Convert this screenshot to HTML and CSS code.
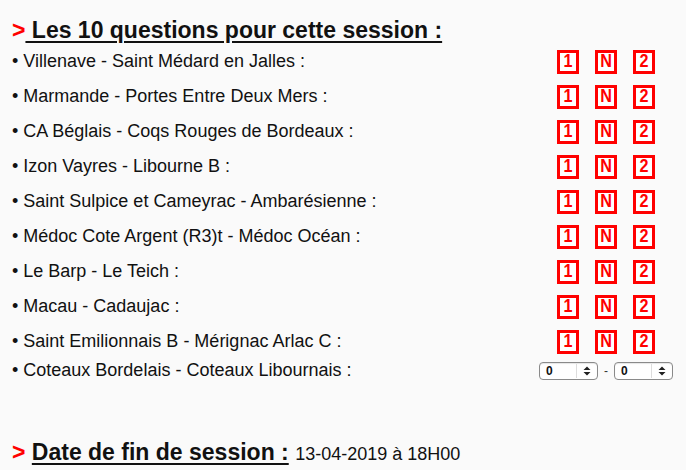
FILE: index.html
```html
<!DOCTYPE html>
<html lang="fr">
<head>
<meta charset="utf-8">
<title>Questions</title>
<link rel="stylesheet" href="styles.css">
</head>
<body>
<div class="page">
  <h2 class="title"><span class="arrow">&gt;</span><span class="ul"> Les 10 questions pour cette session :</span></h2>
  <div class="grid">
    <div class="match">• Villenave - Saint Médard en Jalles :</div>
    <div class="picks"><span class="pk"><span>1</span></span><span class="pk"><span>N</span></span><span class="pk"><span>2</span></span></div>
    <div class="match">• Marmande - Portes Entre Deux Mers :</div>
    <div class="picks"><span class="pk"><span>1</span></span><span class="pk"><span>N</span></span><span class="pk"><span>2</span></span></div>
    <div class="match">• CA Béglais - Coqs Rouges de Bordeaux :</div>
    <div class="picks"><span class="pk"><span>1</span></span><span class="pk"><span>N</span></span><span class="pk"><span>2</span></span></div>
    <div class="match">• Izon Vayres - Libourne B :</div>
    <div class="picks"><span class="pk"><span>1</span></span><span class="pk"><span>N</span></span><span class="pk"><span>2</span></span></div>
    <div class="match">• Saint Sulpice et Cameyrac - Ambarésienne :</div>
    <div class="picks"><span class="pk"><span>1</span></span><span class="pk"><span>N</span></span><span class="pk"><span>2</span></span></div>
    <div class="match">• Médoc Cote Argent (R3)t - Médoc Océan :</div>
    <div class="picks"><span class="pk"><span>1</span></span><span class="pk"><span>N</span></span><span class="pk"><span>2</span></span></div>
    <div class="match">• Le Barp - Le Teich :</div>
    <div class="picks"><span class="pk"><span>1</span></span><span class="pk"><span>N</span></span><span class="pk"><span>2</span></span></div>
    <div class="match">• Macau - Cadaujac :</div>
    <div class="picks"><span class="pk"><span>1</span></span><span class="pk"><span>N</span></span><span class="pk"><span>2</span></span></div>
    <div class="match">• Saint Emilionnais B - Mérignac Arlac C :</div>
    <div class="picks"><span class="pk"><span>1</span></span><span class="pk"><span>N</span></span><span class="pk"><span>2</span></span></div>
    <div class="match last">• Coteaux Bordelais - Coteaux Libournais :</div>
    <div class="picks last">
      <span class="spin"><span class="val">0</span><span class="arr"><svg width="8" height="10" viewBox="0 0 8 10"><path d="M4 0.5 L7.5 4 H0.5 Z M4 9.5 L7.5 6 H0.5 Z" fill="#222"/></svg></span></span>
      <span class="dash">-</span>
      <span class="spin"><span class="val">0</span><span class="arr"><svg width="8" height="10" viewBox="0 0 8 10"><path d="M4 0.5 L7.5 4 H0.5 Z M4 9.5 L7.5 6 H0.5 Z" fill="#222"/></svg></span></span>
    </div>
  </div>
  <h2 class="title end"><span class="arrow">&gt;</span> <span class="ul">Date de fin de session :</span> <span class="date">13-04-2019 à 18H00</span></h2>
</div>
</body>
</html>
```
FILE: styles.css
```css
html, body {
  margin: 0;
  padding: 0;
  background: #fafafa;
}
body {
  font-family: "Liberation Sans", Arial, Helvetica, sans-serif;
  color: #111;
}
.page {
  padding: 17px 0 0 12px;
}
.title {
  margin: 0;
  font-size: 23px;
  font-weight: bold;
  line-height: 27px;
  height: 27px;
  white-space: nowrap;
}
.arrow {
  color: #f00;
}
.ul {
  text-decoration: underline;
  text-decoration-thickness: 2px;
  text-underline-offset: 3px;
}
.grid {
  display: grid;
  grid-template-columns: 524px 140px;
  grid-auto-rows: 35px;
}
.match {
  font-size: 18px;
  display: flex;
  align-items: center;
  white-space: nowrap;
}
.picks {
  display: flex;
  align-items: center;
  justify-content: center;
  gap: 16px;
}
.match.last, .picks.last {
  height: 23px;
}
.picks.last {
  gap: 6px;
}
.pk {
  box-sizing: border-box;
  width: 22px;
  height: 24px;
  border: 3px solid #f00;
  background: #fff;
  display: flex;
  box-shadow: inset 0 0 0 1px #fff;
}
.pk span {
  flex: 1;
  color: #f00;
  font-weight: bold;
  font-size: 17px;
  line-height: 18px;
  display: flex;
  align-items: center;
  justify-content: center;
  transform: scale(0.95, 1.05);
}
.spin {
  box-sizing: border-box;
  width: 59px;
  height: 18px;
  border: 1px solid #8a8a8a;
  border-radius: 4px;
  background: #fff;
  display: flex;
  align-items: center;
  box-shadow: inset 0 1px 1px rgba(0,0,0,0.1);
}
.val {
  flex: 1;
  font-size: 12px;
  font-weight: bold;
  padding-left: 6px;
  border-right: 1px solid #ddd;
  line-height: 14px;
}
.arr {
  width: 20px;
  display: flex;
  justify-content: center;
  align-items: center;
}
.dash {
  font-size: 12px;
  color: #333;
}
.end {
  margin-top: 45px;
}
.end .date {
  font-weight: normal;
  font-size: 18px;
}
```
